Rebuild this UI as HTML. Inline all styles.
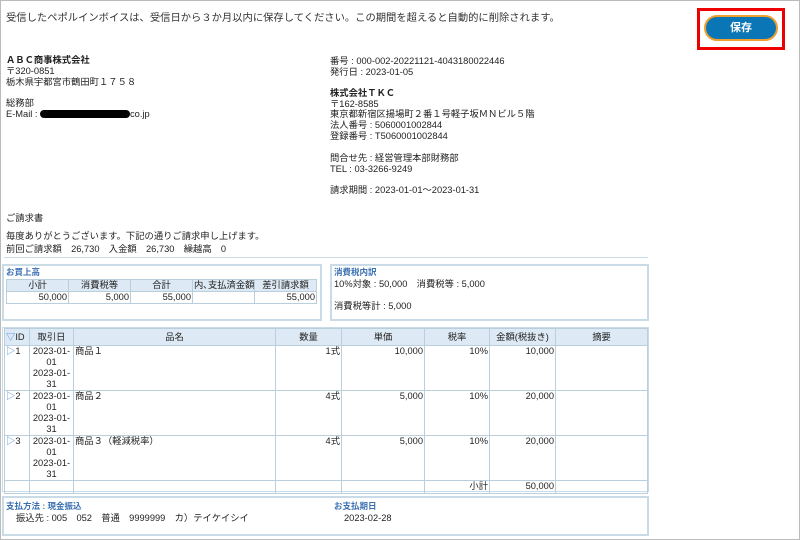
<!DOCTYPE html>
<html><head><meta charset="utf-8"><style>
*{margin:0;padding:0;box-sizing:border-box}
body{width:800px;height:540px;background:#fff;font-family:"Liberation Sans","Noto Sans CJK JP",sans-serif;font-size:9.3px;color:#222;position:relative;overflow:hidden}
.frame{position:absolute;left:0;top:0;width:800px;height:540px;border:1px solid #bbb}
.a{position:absolute;white-space:nowrap;line-height:11px}
.box{position:absolute;border:2px solid #c9dbe6}
.lbl{color:#3a6fb0;font-size:8.5px;font-weight:bold}
table{border-collapse:collapse;position:absolute;table-layout:fixed}
td{border:1px solid #b9cfdc;vertical-align:top;padding:0 1px;line-height:11px;font-size:9.3px;white-space:nowrap;overflow:hidden}
.h td{background:#dde9f4;text-align:center;vertical-align:middle}
.r{text-align:right}
.c{text-align:center}
.tri{color:#4a8ad0}
</style></head><body>
<div class="frame"></div>
<div class="a" style="left:6px;top:13px;font-size:10.3px;color:#333">受信したペポルインボイスは、受信日から３か月以内に保存してください。この期間を超えると自動的に削除されます。</div>
<div style="position:absolute;left:697px;top:8px;width:88px;height:42px;border:3px solid #e00"></div>
<div style="position:absolute;left:704px;top:15px;width:74px;height:26px;border-radius:13px;background:#0b76b5;border:2px solid #f0a030;color:#fff;font-weight:bold;font-size:11px;text-align:center;line-height:22px">保存</div>

<div class="a" style="left:6px;top:55px;font-weight:bold">ＡＢＣ商事株式会社</div>
<div class="a" style="left:6px;top:66px">〒320-0851</div>
<div class="a" style="left:6px;top:77px">栃木県宇都宮市鶴田町１７５８</div>
<div class="a" style="left:6px;top:98px">総務部</div>
<div class="a" style="left:6px;top:109px">E-Mail :</div>
<div style="position:absolute;left:40px;top:110px;width:90px;height:8px;background:#000;border-radius:4px"></div>
<div class="a" style="left:130px;top:109px">co.jp</div>

<div class="a" style="left:330px;top:56px">番号 : 000-002-20221121-4043180022446</div>
<div class="a" style="left:330px;top:67px">発行日 : 2023-01-05</div>
<div class="a" style="left:330px;top:88px;font-weight:bold">株式会社ＴＫＣ</div>
<div class="a" style="left:330px;top:99px">〒162-8585</div>
<div class="a" style="left:330px;top:109px">東京都新宿区揚場町２番１号軽子坂ＭＮビル５階</div>
<div class="a" style="left:330px;top:120px">法人番号 : 5060001002844</div>
<div class="a" style="left:330px;top:131px">登録番号 : T5060001002844</div>
<div class="a" style="left:330px;top:153px">問合せ先 : 経営管理本部財務部</div>
<div class="a" style="left:330px;top:164px">TEL : 03-3266-9249</div>
<div class="a" style="left:330px;top:185px">請求期間 : 2023-01-01～2023-01-31</div>

<div class="a" style="left:6px;top:213px">ご請求書</div>
<div class="a" style="left:6px;top:231px">毎度ありがとうございます。下記の通りご請求申し上げます。</div>
<div class="a" style="left:6px;top:244px">前回ご請求額　26,730　入金額　26,730　繰越高　0</div>
<div style="position:absolute;left:4px;top:257px;width:644px;height:1px;background:#c9dbe6"></div>

<div class="box" style="left:2px;top:264px;width:320px;height:57px"></div>
<div class="a lbl" style="left:6px;top:267px">お買上高</div>
<table style="left:6px;top:279px;width:311px">
<tr class="h" style="height:12px"><td style="width:62px">小計</td><td style="width:62px">消費税等</td><td style="width:62px">合計</td><td style="width:62px">内､支払済金額</td><td>差引請求額</td></tr>
<tr><td class="r">50,000</td><td class="r">5,000</td><td class="r">55,000</td><td></td><td class="r">55,000</td></tr>
</table>
<div class="box" style="left:330px;top:264px;width:319px;height:57px"></div>
<div class="a lbl" style="left:334px;top:267px">消費税内訳</div>
<div class="a" style="left:334px;top:279px">10%対象 : 50,000　消費税等 : 5,000</div>
<div class="a" style="left:334px;top:301px">消費税等計 : 5,000</div>

<div class="box" style="left:2px;top:327px;width:647px;height:165px;border-width:1px"></div>
<table style="left:4px;top:328px;width:644px">
<tr class="h" style="height:17px"><td style="width:25px;text-align:left"><span class="tri">▽</span>ID</td><td style="width:44px">取引日</td><td style="width:202px">品名</td><td style="width:66px">数量</td><td style="width:83px">単価</td><td style="width:65px">税率</td><td style="width:66px">金額(税抜き)</td><td>摘要</td></tr>
<tr style="height:45px"><td><span class="tri">▷</span>1</td><td class="c">2023-01-<br>01<br>2023-01-<br>31</td><td>商品１</td><td class="r">1式</td><td class="r">10,000</td><td class="r">10%</td><td class="r">10,000</td><td></td></tr>
<tr style="height:44px"><td><span class="tri">▷</span>2</td><td class="c">2023-01-<br>01<br>2023-01-<br>31</td><td>商品２</td><td class="r">4式</td><td class="r">5,000</td><td class="r">10%</td><td class="r">20,000</td><td></td></tr>
<tr style="height:44px"><td><span class="tri">▷</span>3</td><td class="c">2023-01-<br>01<br>2023-01-<br>31</td><td>商品３（軽減税率）</td><td class="r">4式</td><td class="r">5,000</td><td class="r">10%</td><td class="r">20,000</td><td></td></tr>
<tr style="height:13px"><td></td><td></td><td></td><td></td><td></td><td class="r">小計</td><td class="r">50,000</td><td></td></tr>
</table>

<div class="box" style="left:2px;top:496px;width:647px;height:40px"></div>
<div class="a lbl" style="left:6px;top:501px">支払方法 : 現金振込</div>
<div class="a" style="left:16px;top:513px">振込先 : 005　052　普通　9999999　カ）テイケイシイ</div>
<div class="a lbl" style="left:334px;top:501px">お支払期日</div>
<div class="a" style="left:344px;top:513px">2023-02-28</div>
</body></html>
